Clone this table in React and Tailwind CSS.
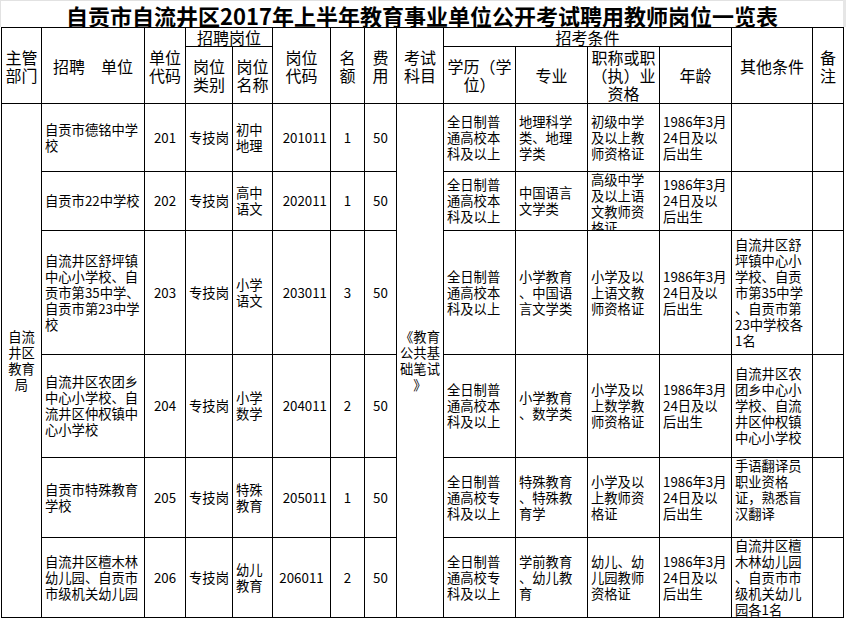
import React from "react";

const BASE =
  "border-r border-b border-black overflow-hidden flex flex-col [justify-content:safe_center]";

function H({ pos, lines }) {
  return (
    <div className={`${BASE} items-center text-center text-[16px] leading-[18px] ${pos}`}>
      {lines.map((l, i) => (
        <div key={i} className="whitespace-nowrap">
          {l}
        </div>
      ))}
    </div>
  );
}

function C({ pos = "", lines = [], align = "left", top = false }) {
  const a =
    align === "center"
      ? "items-center text-center"
      : align === "right"
      ? "items-end text-right pr-[3px]"
      : "items-start text-left pl-[3px]";
  return (
    <div
      className={`border-r border-b border-black overflow-hidden flex flex-col ${
        top ? "justify-start" : "[justify-content:safe_center]"
      } ${a} text-[13.3px] leading-[16px] ${pos}`}
    >
      {lines.map((l, i) => (
        <div key={i} className="whitespace-nowrap">
          {l}
        </div>
      ))}
    </div>
  );
}

const rows = [
  {
    unit: ["自贡市德铭中学", "校"],
    code: "201",
    name: ["初中", "地理"],
    pcode: "201011",
    pcodeAlign: "right",
    num: "1",
    edu: ["全日制普", "通高校本", "科及以上"],
    major: ["地理科学", "类、地理", "学类"],
    title: ["初级中学", "及以上教", "师资格证"],
    other: [],
  },
  {
    unit: ["自贡市22中学校"],
    code: "202",
    name: ["高中", "语文"],
    pcode: "202011",
    pcodeAlign: "right",
    num: "1",
    edu: ["全日制普", "通高校本", "科及以上"],
    major: ["中国语言", "文学类"],
    title: ["高级中学", "及以上语", "文教师资", "格证"],
    other: [],
  },
  {
    unit: ["自流井区舒坪镇", "中心小学校、自", "贡市第35中学、", "自贡市第23中学", "校"],
    code: "203",
    name: ["小学", "语文"],
    pcode: "203011",
    pcodeAlign: "right",
    num: "3",
    edu: ["全日制普", "通高校本", "科及以上"],
    major: ["小学教育", "、中国语", "言文学类"],
    title: ["小学及以", "上语文教", "师资格证"],
    other: ["自流井区舒", "坪镇中心小", "学校、自贡", "市第35中学", "、自贡市第", "23中学校各", "1名"],
  },
  {
    unit: ["自流井区农团乡", "中心小学校、自", "流井区仲权镇中", "心小学校"],
    code: "204",
    name: ["小学", "数学"],
    pcode: "204011",
    pcodeAlign: "right",
    num: "2",
    edu: ["全日制普", "通高校本", "科及以上"],
    major: ["小学教育", "、数学类"],
    title: ["小学及以", "上数学教", "师资格证"],
    other: ["自流井区农", "团乡中心小", "学校、自流", "井区仲权镇", "中心小学校"],
  },
  {
    unit: ["自贡市特殊教育", "学校"],
    code: "205",
    name: ["特殊", "教育"],
    pcode: "205011",
    pcodeAlign: "right",
    num: "1",
    edu: ["全日制普", "通高校专", "科及以上"],
    major: ["特殊教育", "、特殊教", "育学"],
    title: ["小学及以", "上教师资", "格证"],
    other: ["手语翻译员", "职业资格", "证，熟悉盲", "汉翻译"],
    otherTop: true,
  },
  {
    unit: ["自流井区檀木林", "幼儿园、自贡市", "市级机关幼儿园"],
    code: "206",
    name: ["幼儿", "教育"],
    pcode: "206011",
    pcodeAlign: "center",
    num: "2",
    edu: ["全日制普", "通高校专", "科及以上"],
    major: ["学前教育", "、幼儿教", "育"],
    title: ["幼儿、幼", "儿园教师", "资格证"],
    other: ["自流井区檀", "木林幼儿园", "、自贡市市", "级机关幼儿", "园各1名"],
  },
];

const ROW_START = [
  "row-start-3",
  "row-start-4",
  "row-start-5",
  "row-start-6",
  "row-start-7",
  "row-start-8",
];

export default function App() {
  return (
    <div
      className="w-[846px] h-[620px] bg-white overflow-hidden text-black"
      style={{ fontFamily: '"Noto Sans CJK SC", "Noto Sans", sans-serif' }}
    >
      <div className="flex h-[27px]">
        <div className="w-[843px] h-[27px] border-t border-l border-[#e2e2e2] flex items-center justify-center text-[22px] font-bold leading-[26px] pt-[2px] whitespace-nowrap">
          自贡市自流井区2017年上半年教育事业单位公开考试聘用教师岗位一览表
        </div>
        <div className="w-[3px] h-[27px] bg-[#e6e6e6]" />
      </div>
      <div className="ml-[1px] w-[843px] grid grid-cols-[40px_103px_41px_47px_40px_58px_34px_32px_47px_72px_72px_72px_72px_81px_31px] grid-rows-[19px_57px_68px_59px_124px_103px_80px_80px] border-l border-t border-black">
        <H pos="col-start-1 row-start-1 row-span-2" lines={["主管", "部门"]} />
        <H pos="col-start-2 row-start-1 row-span-2" lines={["招聘　单位"]} />
        <H pos="col-start-3 row-start-1 row-span-2" lines={["单位", "代码"]} />
        <H pos="col-start-4 col-span-2 row-start-1" lines={["招聘岗位"]} />
        <H pos="col-start-4 row-start-2" lines={["岗位", "类别"]} />
        <H pos="col-start-5 row-start-2" lines={["岗位", "名称"]} />
        <H pos="col-start-6 row-start-1 row-span-2" lines={["岗位", "代码"]} />
        <H pos="col-start-7 row-start-1 row-span-2" lines={["名", "额"]} />
        <H pos="col-start-8 row-start-1 row-span-2" lines={["费", "用"]} />
        <H pos="col-start-9 row-start-1 row-span-2" lines={["考试", "科目"]} />
        <H pos="col-start-10 col-span-4 row-start-1" lines={["招考条件"]} />
        <H pos="col-start-10 row-start-2" lines={["学历（学", "位）"]} />
        <H pos="col-start-11 row-start-2" lines={["专业"]} />
        <H pos="col-start-12 row-start-2" lines={["职称或职", "（执）业", "资格"]} />
        <H pos="col-start-13 row-start-2" lines={["年龄"]} />
        <H pos="col-start-14 row-start-1 row-span-2" lines={["其他条件"]} />
        <H pos="col-start-15 row-start-1 row-span-2" lines={["备", "注"]} />

        <C
          pos="col-start-1 row-start-3 row-span-6"
          align="center"
          lines={["自流", "井区", "教育", "局"]}
        />
        <C
          pos="col-start-9 row-start-3 row-span-6"
          align="center"
          lines={["《教育", "公共基", "础笔试", "》"]}
        />

        {rows.map((r, i) => {
          const rs = ROW_START[i];
          return (
            <React.Fragment key={i}>
              <C pos={`col-start-2 ${rs}`} lines={r.unit} />
              <C pos={`col-start-3 ${rs}`} align="center" lines={[r.code]} />
              <C pos={`col-start-4 ${rs}`} align="center" lines={["专技岗"]} />
              <C pos={`col-start-5 ${rs}`} lines={r.name} />
              <C pos={`col-start-6 ${rs}`} align={r.pcodeAlign} lines={[r.pcode]} />
              <C pos={`col-start-7 ${rs}`} align="center" lines={[r.num]} />
              <C pos={`col-start-8 ${rs}`} align="center" lines={["50"]} />
              <C pos={`col-start-10 ${rs}`} lines={r.edu} />
              <C pos={`col-start-11 ${rs}`} lines={r.major} />
              <C pos={`col-start-12 ${rs}`} lines={r.title} />
              <C pos={`col-start-13 ${rs}`} lines={["1986年3月", "24日及以", "后出生"]} />
              <C pos={`col-start-14 ${rs}`} lines={r.other} top={r.otherTop} />
              <C pos={`col-start-15 ${rs}`} lines={[]} />
            </React.Fragment>
          );
        })}
      </div>
    </div>
  );
}
